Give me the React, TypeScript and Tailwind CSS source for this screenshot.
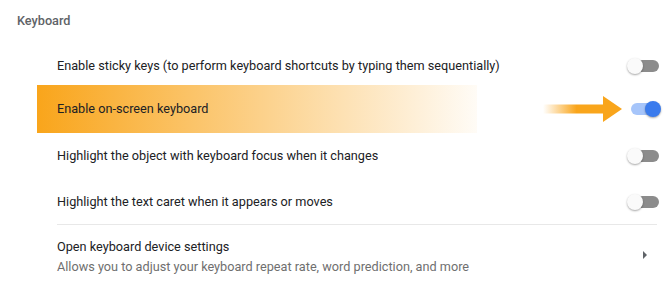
import React from 'react';

const Toggle: React.FC<{ on?: boolean }> = ({ on }) => (
  <div className="relative w-[28px] h-[12px] mr-[12px]">
    <div className={`absolute inset-0 rounded-full ${on ? 'bg-[#a6c5fa]' : 'bg-[#8c8c8c]'}`} />
    <div
      className={`absolute top-[-2px] w-[16px] h-[16px] rounded-full shadow-[0_1px_2px_rgba(0,0,0,0.35)] ${
        on ? 'left-[14px] bg-[#3a7bed]' : 'left-[-4px] bg-[#fafafa]'
      }`}
    />
  </div>
);

const Row: React.FC<{ label: string; className: string }> = ({ label, className }) => (
  <div className={`flex items-center justify-between pl-[57px] ${className}`}>
    <span className="text-[12.7px] text-[#202124]">{label}</span>
    <Toggle />
  </div>
);

export default function App() {
  return (
    <div className="w-[671px] h-[297px] bg-white overflow-hidden font-['Roboto',sans-serif]">
      <div className="h-[42px] flex items-center pl-[17px]">
        <span className="text-[12.7px] font-medium text-[#5f6368]">Keyboard</span>
      </div>

      <Row label="Enable sticky keys (to perform keyboard shortcuts by typing them sequentially)" className="h-[43px] pt-[5px]" />

      <div className="relative h-[48px] flex items-center justify-between">
        <div className="absolute left-[37px] top-0 w-[440px] h-full bg-[linear-gradient(to_right,#f9a51b,rgba(249,165,27,0.04))]" />
        <span className="relative pl-[57px] text-[12.7px] text-[#202124]">Enable on-screen keyboard</span>
        <div className="relative flex items-center">
          <svg width="80" height="28" viewBox="0 0 80 28" className="mr-[8px]">
            <defs>
              <linearGradient id="tail" x1="0" x2="1" y1="0" y2="0">
                <stop offset="0" stopColor="#f9a51b" stopOpacity="0" />
                <stop offset="0.55" stopColor="#f9a51b" stopOpacity="1" />
              </linearGradient>
            </defs>
            <rect x="0" y="9.5" width="61" height="9" fill="url(#tail)" />
            <polygon points="60,1 79,14 60,27" fill="#f9a51b" />
          </svg>
          <Toggle on />
        </div>
      </div>

      <Row label="Highlight the object with keyboard focus when it changes" className="h-[46px]" />
      <Row label="Highlight the text caret when it appears or moves" className="h-[45px]" />

      <div className="ml-[57px] mr-[14px] border-t border-[#e8e8e8] flex items-center justify-between pt-[12px]">
        <div className="flex flex-col">
          <span className="text-[12.7px] leading-[20px] text-[#202124]">Open keyboard device settings</span>
          <span className="text-[12.7px] leading-[20px] text-[#6f6f6f]">
            Allows you to adjust your keyboard repeat rate, word prediction, and more
          </span>
        </div>
        <svg width="4" height="8" viewBox="0 0 4 8" className="mr-[10px] mt-[-4px]">
          <polygon points="0,0 4,4 0,8" fill="#5f6368" />
        </svg>
      </div>
    </div>
  );
}
